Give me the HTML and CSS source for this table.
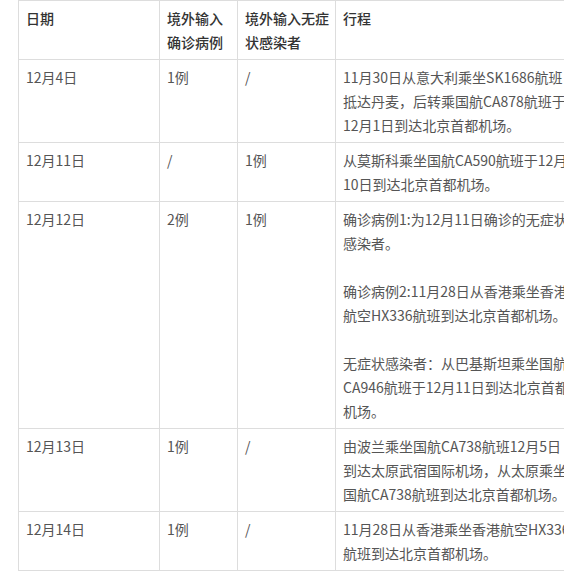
FILE: index.html
```html
<!DOCTYPE html>
<html lang="zh-CN">
<head>
<meta charset="utf-8">
<link rel="stylesheet" href="styles.css">
</head>
<body>
<div class="wrap">
<table class="tbl">
  <colgroup>
    <col class="c1"><col class="c2"><col class="c3"><col class="c4">
  </colgroup>
  <thead>
    <tr>
      <th>日期</th>
      <th>境外输入确诊病例</th>
      <th>境外输入无症状感染者</th>
      <th>行程</th>
    </tr>
  </thead>
  <tbody>
    <tr>
      <td>12月4日</td>
      <td>1例</td>
      <td>/</td>
      <td>11月30日从意大利乘坐SK1686航班抵达丹麦，后转乘国航CA878航班于12月1日到达北京首都机场。</td>
    </tr>
    <tr>
      <td>12月11日</td>
      <td>/</td>
      <td>1例</td>
      <td>从莫斯科乘坐国航CA590航班于12月10日到达北京首都机场。</td>
    </tr>
    <tr>
      <td>12月12日</td>
      <td>2例</td>
      <td>1例</td>
      <td>确诊病例1:为12月11日确诊的无症状感染者。<br><br>确诊病例2:11月28日从香港乘坐香港航空HX336航班到达北京首都机场。<br><br>无症状感染者：从巴基斯坦乘坐国航CA946航班于12月11日到达北京首都机场。</td>
    </tr>
    <tr>
      <td>12月13日</td>
      <td>1例</td>
      <td>/</td>
      <td>由波兰乘坐国航CA738航班12月5日到达太原武宿国际机场，从太原乘坐国航CA738航班到达北京首都机场。</td>
    </tr>
    <tr>
      <td>12月14日</td>
      <td>1例</td>
      <td>/</td>
      <td>11月28日从香港乘坐香港航空HX336航班到达北京首都机场。</td>
    </tr>
  </tbody>
</table>
</div>
</body>
</html>
```
FILE: styles.css
```css
html, body {
  margin: 0;
  padding: 0;
  background: #fff;
  overflow: hidden;
}
.wrap {
  padding-left: 18px;
}
.tbl {
  border-collapse: collapse;
  table-layout: fixed;
  width: 560px;
  font-family: "Noto Sans CJK SC", "Noto Sans", sans-serif;
  font-size: 14px;
  line-height: 24px;
  color: #555;
}
.c1 { width: 141px; }
.c2 { width: 78px; }
.c3 { width: 98px; }
.c4 { width: 243px; }
.tbl th,
.tbl td {
  border: 1px solid #ddd;
  padding: 5px 6px 5px 7px;
  text-align: left;
  vertical-align: top;
}
.tbl th {
  color: #333;
  font-weight: 500;
}
```
